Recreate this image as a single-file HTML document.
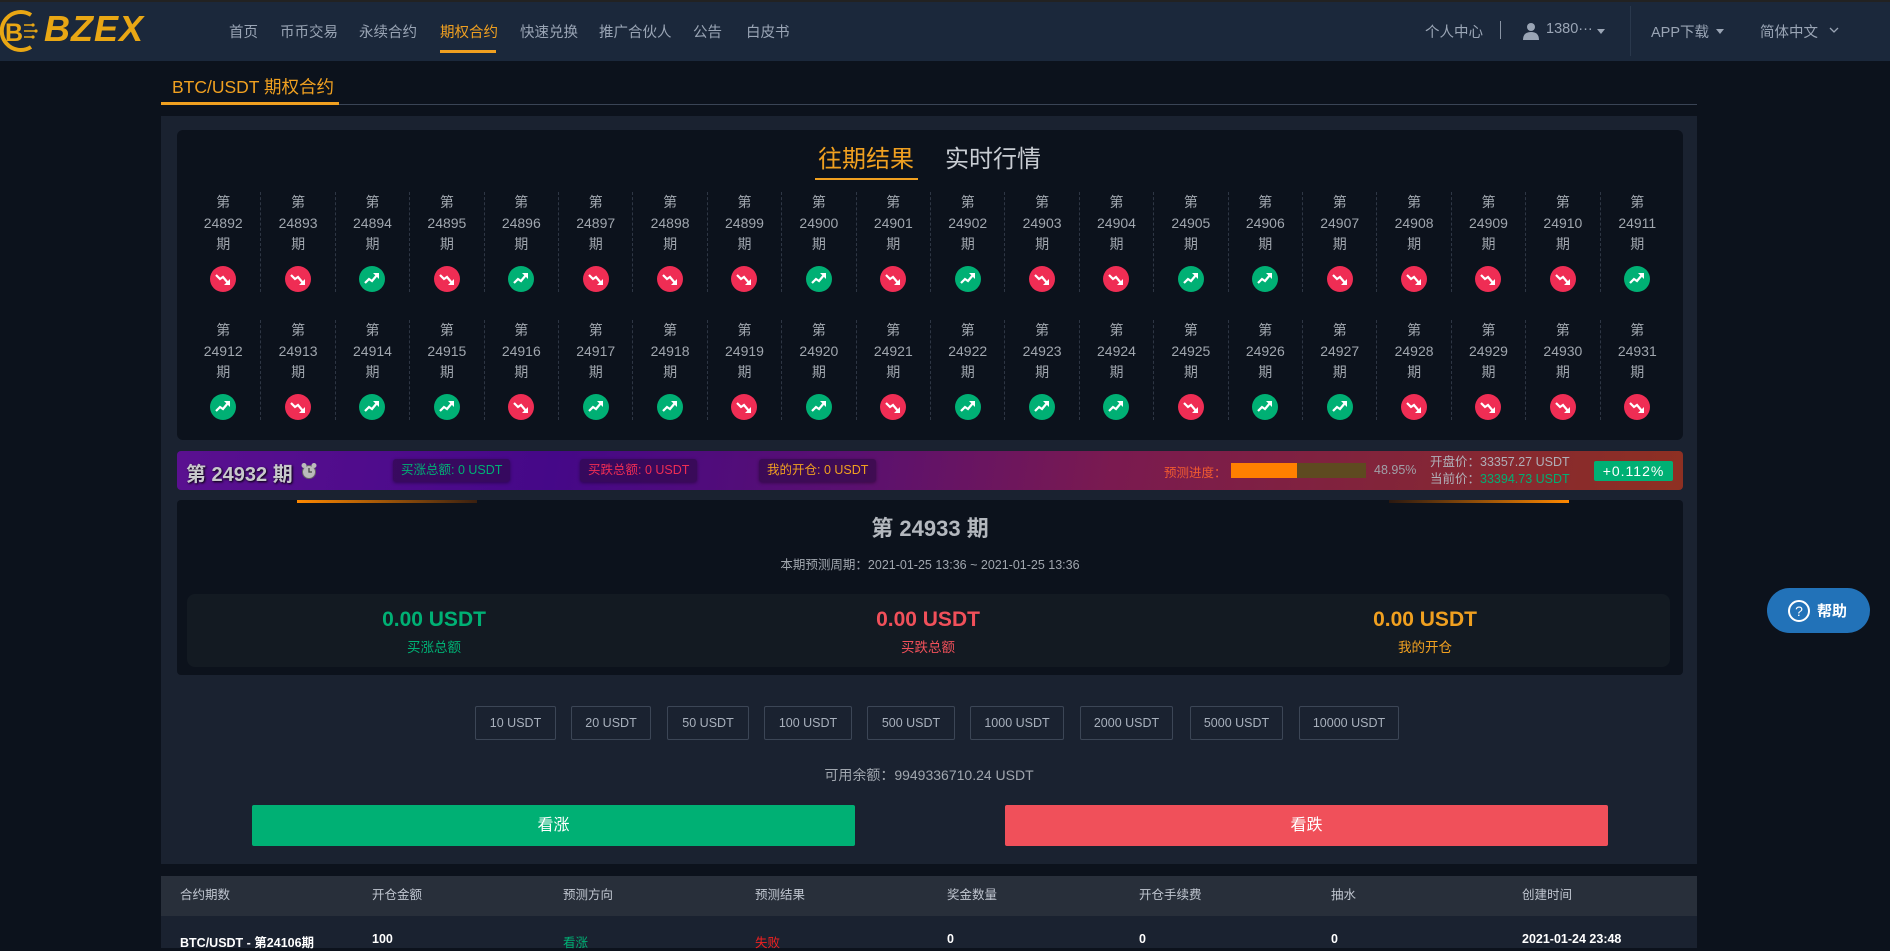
<!DOCTYPE html>
<html><head><meta charset="utf-8"><style>
*{margin:0;padding:0;box-sizing:border-box}
body{width:1890px;height:948px;overflow:hidden;background:#0c121c;font-family:"Liberation Sans","Noto Sans CJK SC",sans-serif;position:relative;color:#aab}
.a{position:absolute}
.hdr{left:0;top:0;width:1890px;height:61px;background:#1b283b;border-top:2px solid #222}
.nav{top:21px;font-size:14.5px;color:#9aa5b5;white-space:nowrap}
.nav.on{color:#f0a020}
.box{background:#0c121c;border-radius:6px}
.col{position:absolute;width:74.4px;height:100px;text-align:center;font-size:14px;line-height:21px;color:#a0a6ae}
.col+.col{border-left:1px dashed #2e3644}
.ic{display:block;width:26px;height:26px;border-radius:50%;margin:11px auto 0}
.u{background:#00b074}.d{background:#ef2d54}
.ic svg{display:block}
.chip{top:8px;height:23px;line-height:23px;font-size:12.5px;padding:0 8px;background:rgba(40,10,60,.55);border-radius:3px;box-shadow:0 1px 3px rgba(0,0,0,.4)}
.amt{top:706px;height:34px;line-height:32px;border:1px solid #3c4656;border-radius:2px;font-size:12.5px;color:#a8b0bc;text-align:center}
.th{top:884px;font-size:12.5px;color:#c0c6d0}
.td{top:932px;font-size:12.5px;color:#fff;font-weight:bold}
</style></head><body>
<div class="a hdr"></div>
<svg class="a" style="left:0;top:8px" width="42" height="46" viewBox="0 0 42 46"><path d="M31 7 A19 19 0 1 0 31 39" fill="none" stroke="#e9a714" stroke-width="4"/><text x="5" y="33" font-family="Liberation Sans" font-weight="bold" font-size="25" fill="#e9a714">B</text><path d="M24 17h8M24 23h11M24 29h8" stroke="#e9a714" stroke-width="1.6"/><circle cx="33" cy="17" r="1.6" fill="#e9a714"/><circle cx="36" cy="23" r="1.6" fill="#e9a714"/><circle cx="33" cy="29" r="1.6" fill="#e9a714"/></svg>
<div class="a" style="left:44px;top:8px;font-size:36px;font-weight:bold;font-style:italic;color:#e9a714;letter-spacing:1px">BZEX</div>
<div class="a nav" style="left:229px">首页</div>
<div class="a nav" style="left:280px">币币交易</div>
<div class="a nav" style="left:359px">永续合约</div>
<div class="a nav on" style="left:440px">期权合约</div>
<div class="a" style="left:440px;top:50px;width:56px;height:3px;background:#f0a020"></div>
<div class="a nav" style="left:520px">快速兑换</div>
<div class="a nav" style="left:599px">推广合伙人</div>
<div class="a nav" style="left:693px">公告</div>
<div class="a nav" style="left:746px">白皮书</div>
<div class="a nav" style="left:1425px">个人中心</div>
<div class="a" style="left:1500px;top:21px;width:1px;height:18px;background:#8a95a5"></div>
<svg class="a" style="left:1522px;top:22px" width="18" height="18" viewBox="0 0 18 18"><circle cx="9" cy="5" r="4" fill="#9aa5b5"/><path d="M1 18 Q1 10 9 10 Q17 10 17 18Z" fill="#9aa5b5"/></svg>
<div class="a nav" style="left:1546px">1380···</div>
<div class="a" style="left:1597px;top:29px;border:4px solid transparent;border-top:5px solid #9aa5b5"></div>
<div class="a" style="left:1630px;top:6px;width:1px;height:50px;background:#2a384c"></div>
<div class="a nav" style="left:1651px">APP下载</div>
<div class="a" style="left:1716px;top:29px;border:4px solid transparent;border-top:5px solid #9aa5b5"></div>
<div class="a nav" style="left:1760px">简体中文</div>
<svg class="a" style="left:1829px;top:27px" width="10" height="7"><path d="M1 1l4 4 4-4" stroke="#9aa5b5" fill="none" stroke-width="1.3"/></svg>

<div class="a" style="left:172px;top:74px;font-size:17.5px;color:#f0a020">BTC/USDT 期权合约</div>
<div class="a" style="left:161px;top:104px;width:1536px;height:1px;background:#3a4455"></div>
<div class="a" style="left:161px;top:102px;width:178px;height:3px;background:#f0a020"></div>

<div class="a" style="left:161px;top:116px;width:1536px;height:748px;background:#1a2230"></div>
<div class="a box" style="left:177px;top:130px;width:1506px;height:310px">
<div class="a" style="left:641px;top:9px;font-size:24px;color:#f0a020">往期结果</div>
<div class="a" style="left:638px;top:48px;width:103px;height:2px;background:#f0a020"></div>
<div class="a" style="left:768px;top:9px;font-size:24px;color:#c8ccd2">实时行情</div>
<div class="a" style="left:9px;top:62px;width:1488px;height:100px">
<div class="col" style="left:0"><p>第</p><p>24892</p><p>期</p><i class="ic d"><svg width="26" height="26"><path d="M6 9l4 4 3-2 5 6" stroke="#fff" stroke-width="2.2" fill="none"/><path d="M20 19h-6l6-6z" fill="#fff"/></svg></i></div>
<div class="col" style="left:74.4px"><p>第</p><p>24893</p><p>期</p><i class="ic d"><svg width="26" height="26"><path d="M6 9l4 4 3-2 5 6" stroke="#fff" stroke-width="2.2" fill="none"/><path d="M20 19h-6l6-6z" fill="#fff"/></svg></i></div>
<div class="col" style="left:148.8px"><p>第</p><p>24894</p><p>期</p><i class="ic u"><svg width="26" height="26"><path d="M6 17l4-4 3 2 5-6" stroke="#fff" stroke-width="2.2" fill="none"/><path d="M20 7h-6l6 6z" fill="#fff"/></svg></i></div>
<div class="col" style="left:223.2px"><p>第</p><p>24895</p><p>期</p><i class="ic d"><svg width="26" height="26"><path d="M6 9l4 4 3-2 5 6" stroke="#fff" stroke-width="2.2" fill="none"/><path d="M20 19h-6l6-6z" fill="#fff"/></svg></i></div>
<div class="col" style="left:297.6px"><p>第</p><p>24896</p><p>期</p><i class="ic u"><svg width="26" height="26"><path d="M6 17l4-4 3 2 5-6" stroke="#fff" stroke-width="2.2" fill="none"/><path d="M20 7h-6l6 6z" fill="#fff"/></svg></i></div>
<div class="col" style="left:372px"><p>第</p><p>24897</p><p>期</p><i class="ic d"><svg width="26" height="26"><path d="M6 9l4 4 3-2 5 6" stroke="#fff" stroke-width="2.2" fill="none"/><path d="M20 19h-6l6-6z" fill="#fff"/></svg></i></div>
<div class="col" style="left:446.4px"><p>第</p><p>24898</p><p>期</p><i class="ic d"><svg width="26" height="26"><path d="M6 9l4 4 3-2 5 6" stroke="#fff" stroke-width="2.2" fill="none"/><path d="M20 19h-6l6-6z" fill="#fff"/></svg></i></div>
<div class="col" style="left:520.8px"><p>第</p><p>24899</p><p>期</p><i class="ic d"><svg width="26" height="26"><path d="M6 9l4 4 3-2 5 6" stroke="#fff" stroke-width="2.2" fill="none"/><path d="M20 19h-6l6-6z" fill="#fff"/></svg></i></div>
<div class="col" style="left:595.2px"><p>第</p><p>24900</p><p>期</p><i class="ic u"><svg width="26" height="26"><path d="M6 17l4-4 3 2 5-6" stroke="#fff" stroke-width="2.2" fill="none"/><path d="M20 7h-6l6 6z" fill="#fff"/></svg></i></div>
<div class="col" style="left:669.6px"><p>第</p><p>24901</p><p>期</p><i class="ic d"><svg width="26" height="26"><path d="M6 9l4 4 3-2 5 6" stroke="#fff" stroke-width="2.2" fill="none"/><path d="M20 19h-6l6-6z" fill="#fff"/></svg></i></div>
<div class="col" style="left:744px"><p>第</p><p>24902</p><p>期</p><i class="ic u"><svg width="26" height="26"><path d="M6 17l4-4 3 2 5-6" stroke="#fff" stroke-width="2.2" fill="none"/><path d="M20 7h-6l6 6z" fill="#fff"/></svg></i></div>
<div class="col" style="left:818.4px"><p>第</p><p>24903</p><p>期</p><i class="ic d"><svg width="26" height="26"><path d="M6 9l4 4 3-2 5 6" stroke="#fff" stroke-width="2.2" fill="none"/><path d="M20 19h-6l6-6z" fill="#fff"/></svg></i></div>
<div class="col" style="left:892.8px"><p>第</p><p>24904</p><p>期</p><i class="ic d"><svg width="26" height="26"><path d="M6 9l4 4 3-2 5 6" stroke="#fff" stroke-width="2.2" fill="none"/><path d="M20 19h-6l6-6z" fill="#fff"/></svg></i></div>
<div class="col" style="left:967.2px"><p>第</p><p>24905</p><p>期</p><i class="ic u"><svg width="26" height="26"><path d="M6 17l4-4 3 2 5-6" stroke="#fff" stroke-width="2.2" fill="none"/><path d="M20 7h-6l6 6z" fill="#fff"/></svg></i></div>
<div class="col" style="left:1041.6px"><p>第</p><p>24906</p><p>期</p><i class="ic u"><svg width="26" height="26"><path d="M6 17l4-4 3 2 5-6" stroke="#fff" stroke-width="2.2" fill="none"/><path d="M20 7h-6l6 6z" fill="#fff"/></svg></i></div>
<div class="col" style="left:1116px"><p>第</p><p>24907</p><p>期</p><i class="ic d"><svg width="26" height="26"><path d="M6 9l4 4 3-2 5 6" stroke="#fff" stroke-width="2.2" fill="none"/><path d="M20 19h-6l6-6z" fill="#fff"/></svg></i></div>
<div class="col" style="left:1190.4px"><p>第</p><p>24908</p><p>期</p><i class="ic d"><svg width="26" height="26"><path d="M6 9l4 4 3-2 5 6" stroke="#fff" stroke-width="2.2" fill="none"/><path d="M20 19h-6l6-6z" fill="#fff"/></svg></i></div>
<div class="col" style="left:1264.8px"><p>第</p><p>24909</p><p>期</p><i class="ic d"><svg width="26" height="26"><path d="M6 9l4 4 3-2 5 6" stroke="#fff" stroke-width="2.2" fill="none"/><path d="M20 19h-6l6-6z" fill="#fff"/></svg></i></div>
<div class="col" style="left:1339.2px"><p>第</p><p>24910</p><p>期</p><i class="ic d"><svg width="26" height="26"><path d="M6 9l4 4 3-2 5 6" stroke="#fff" stroke-width="2.2" fill="none"/><path d="M20 19h-6l6-6z" fill="#fff"/></svg></i></div>
<div class="col" style="left:1413.6px"><p>第</p><p>24911</p><p>期</p><i class="ic u"><svg width="26" height="26"><path d="M6 17l4-4 3 2 5-6" stroke="#fff" stroke-width="2.2" fill="none"/><path d="M20 7h-6l6 6z" fill="#fff"/></svg></i></div>
</div>
<div class="a" style="left:9px;top:190px;width:1488px;height:100px">
<div class="col" style="left:0"><p>第</p><p>24912</p><p>期</p><i class="ic u"><svg width="26" height="26"><path d="M6 17l4-4 3 2 5-6" stroke="#fff" stroke-width="2.2" fill="none"/><path d="M20 7h-6l6 6z" fill="#fff"/></svg></i></div>
<div class="col" style="left:74.4px"><p>第</p><p>24913</p><p>期</p><i class="ic d"><svg width="26" height="26"><path d="M6 9l4 4 3-2 5 6" stroke="#fff" stroke-width="2.2" fill="none"/><path d="M20 19h-6l6-6z" fill="#fff"/></svg></i></div>
<div class="col" style="left:148.8px"><p>第</p><p>24914</p><p>期</p><i class="ic u"><svg width="26" height="26"><path d="M6 17l4-4 3 2 5-6" stroke="#fff" stroke-width="2.2" fill="none"/><path d="M20 7h-6l6 6z" fill="#fff"/></svg></i></div>
<div class="col" style="left:223.2px"><p>第</p><p>24915</p><p>期</p><i class="ic u"><svg width="26" height="26"><path d="M6 17l4-4 3 2 5-6" stroke="#fff" stroke-width="2.2" fill="none"/><path d="M20 7h-6l6 6z" fill="#fff"/></svg></i></div>
<div class="col" style="left:297.6px"><p>第</p><p>24916</p><p>期</p><i class="ic d"><svg width="26" height="26"><path d="M6 9l4 4 3-2 5 6" stroke="#fff" stroke-width="2.2" fill="none"/><path d="M20 19h-6l6-6z" fill="#fff"/></svg></i></div>
<div class="col" style="left:372px"><p>第</p><p>24917</p><p>期</p><i class="ic u"><svg width="26" height="26"><path d="M6 17l4-4 3 2 5-6" stroke="#fff" stroke-width="2.2" fill="none"/><path d="M20 7h-6l6 6z" fill="#fff"/></svg></i></div>
<div class="col" style="left:446.4px"><p>第</p><p>24918</p><p>期</p><i class="ic u"><svg width="26" height="26"><path d="M6 17l4-4 3 2 5-6" stroke="#fff" stroke-width="2.2" fill="none"/><path d="M20 7h-6l6 6z" fill="#fff"/></svg></i></div>
<div class="col" style="left:520.8px"><p>第</p><p>24919</p><p>期</p><i class="ic d"><svg width="26" height="26"><path d="M6 9l4 4 3-2 5 6" stroke="#fff" stroke-width="2.2" fill="none"/><path d="M20 19h-6l6-6z" fill="#fff"/></svg></i></div>
<div class="col" style="left:595.2px"><p>第</p><p>24920</p><p>期</p><i class="ic u"><svg width="26" height="26"><path d="M6 17l4-4 3 2 5-6" stroke="#fff" stroke-width="2.2" fill="none"/><path d="M20 7h-6l6 6z" fill="#fff"/></svg></i></div>
<div class="col" style="left:669.6px"><p>第</p><p>24921</p><p>期</p><i class="ic d"><svg width="26" height="26"><path d="M6 9l4 4 3-2 5 6" stroke="#fff" stroke-width="2.2" fill="none"/><path d="M20 19h-6l6-6z" fill="#fff"/></svg></i></div>
<div class="col" style="left:744px"><p>第</p><p>24922</p><p>期</p><i class="ic u"><svg width="26" height="26"><path d="M6 17l4-4 3 2 5-6" stroke="#fff" stroke-width="2.2" fill="none"/><path d="M20 7h-6l6 6z" fill="#fff"/></svg></i></div>
<div class="col" style="left:818.4px"><p>第</p><p>24923</p><p>期</p><i class="ic u"><svg width="26" height="26"><path d="M6 17l4-4 3 2 5-6" stroke="#fff" stroke-width="2.2" fill="none"/><path d="M20 7h-6l6 6z" fill="#fff"/></svg></i></div>
<div class="col" style="left:892.8px"><p>第</p><p>24924</p><p>期</p><i class="ic u"><svg width="26" height="26"><path d="M6 17l4-4 3 2 5-6" stroke="#fff" stroke-width="2.2" fill="none"/><path d="M20 7h-6l6 6z" fill="#fff"/></svg></i></div>
<div class="col" style="left:967.2px"><p>第</p><p>24925</p><p>期</p><i class="ic d"><svg width="26" height="26"><path d="M6 9l4 4 3-2 5 6" stroke="#fff" stroke-width="2.2" fill="none"/><path d="M20 19h-6l6-6z" fill="#fff"/></svg></i></div>
<div class="col" style="left:1041.6px"><p>第</p><p>24926</p><p>期</p><i class="ic u"><svg width="26" height="26"><path d="M6 17l4-4 3 2 5-6" stroke="#fff" stroke-width="2.2" fill="none"/><path d="M20 7h-6l6 6z" fill="#fff"/></svg></i></div>
<div class="col" style="left:1116px"><p>第</p><p>24927</p><p>期</p><i class="ic u"><svg width="26" height="26"><path d="M6 17l4-4 3 2 5-6" stroke="#fff" stroke-width="2.2" fill="none"/><path d="M20 7h-6l6 6z" fill="#fff"/></svg></i></div>
<div class="col" style="left:1190.4px"><p>第</p><p>24928</p><p>期</p><i class="ic d"><svg width="26" height="26"><path d="M6 9l4 4 3-2 5 6" stroke="#fff" stroke-width="2.2" fill="none"/><path d="M20 19h-6l6-6z" fill="#fff"/></svg></i></div>
<div class="col" style="left:1264.8px"><p>第</p><p>24929</p><p>期</p><i class="ic d"><svg width="26" height="26"><path d="M6 9l4 4 3-2 5 6" stroke="#fff" stroke-width="2.2" fill="none"/><path d="M20 19h-6l6-6z" fill="#fff"/></svg></i></div>
<div class="col" style="left:1339.2px"><p>第</p><p>24930</p><p>期</p><i class="ic d"><svg width="26" height="26"><path d="M6 9l4 4 3-2 5 6" stroke="#fff" stroke-width="2.2" fill="none"/><path d="M20 19h-6l6-6z" fill="#fff"/></svg></i></div>
<div class="col" style="left:1413.6px"><p>第</p><p>24931</p><p>期</p><i class="ic d"><svg width="26" height="26"><path d="M6 9l4 4 3-2 5 6" stroke="#fff" stroke-width="2.2" fill="none"/><path d="M20 19h-6l6-6z" fill="#fff"/></svg></i></div>
</div>
</div>

<div class="a" style="left:177px;top:451px;width:1506px;height:39px;border-radius:4px;background:linear-gradient(100deg,#5a1090 0%,#450888 25%,#5a1070 45%,#7a1a50 62%,#82243a 80%,#8e3022 100%)">
<div class="a" style="left:9px;top:7px;font-size:20px;font-weight:bold;color:#c8c8cc;text-shadow:1px 1px 2px #000">第 24932 期</div>
<svg class="a" style="left:123px;top:11px" width="18" height="18"><circle cx="9" cy="10" r="6.5" fill="#bbb" stroke="#666" stroke-width="1"/><circle cx="4" cy="3.5" r="2.5" fill="#bbb"/><circle cx="14" cy="3.5" r="2.5" fill="#bbb"/><path d="M9 6v4h3" stroke="#444" stroke-width="1.3" fill="none"/></svg>
<div class="a chip" style="left:216px;color:#00b074">买涨总额: 0 USDT</div>
<div class="a chip" style="left:403px;color:#ef2d54">买跌总额: 0 USDT</div>
<div class="a chip" style="left:582px;color:#f0a020">我的开仓: 0 USDT</div>
<div class="a" style="left:987px;top:11px;font-size:12.5px;color:#f05a30">预测进度：</div>
<div class="a" style="left:1054px;top:12px;width:135px;height:15px;background:#5e4a20"><div style="width:66px;height:15px;background:#ff8000"></div></div>
<div class="a" style="left:1197px;top:12px;font-size:12.5px;color:#a0a0a8">48.95%</div>
<div class="a" style="left:1253px;top:3px;font-size:12.5px;color:#b0b0b8;line-height:17px">开盘价：33357.27 USDT<br>当前价：<span style="color:#00b074">33394.73 USDT</span></div>
<div class="a" style="left:1417px;top:10px;width:79px;height:20px;background:#00b074;border-radius:2px;color:#fff;font-size:14px;text-align:center;line-height:20px;letter-spacing:1px">+0.112%</div>
</div>

<div class="a box" style="left:177px;top:500px;width:1506px;height:175px;border-radius:4px">
<div class="a" style="left:120px;top:0;width:180px;height:3px;background:linear-gradient(90deg,#ff8800,#3a2010)"></div>
<div class="a" style="left:1212px;top:0;width:180px;height:3px;background:linear-gradient(90deg,#2a1810,#ff8800)"></div>
<div class="a" style="left:0;top:11px;width:1506px;text-align:center;font-size:22px;font-weight:bold;color:#b4b8be">第 24933 期</div>
<div class="a" style="left:0;top:54px;width:1506px;text-align:center;font-size:12.5px;color:#a0a6ae">本期预测周期：2021-01-25 13:36 ~ 2021-01-25 13:36</div>
<div class="a" style="left:10px;top:94px;width:1483px;height:73px;background:#131a22;border-radius:8px">
<div class="a" style="left:47px;top:14px;width:400px;text-align:center;font-size:21px;font-weight:bold;color:#00b074">0.00 USDT</div>
<div class="a" style="left:47px;top:42px;width:400px;text-align:center;font-size:13.5px;color:#00b074">买涨总额</div>
<div class="a" style="left:541px;top:14px;width:400px;text-align:center;font-size:21px;font-weight:bold;color:#f0505a">0.00 USDT</div>
<div class="a" style="left:541px;top:42px;width:400px;text-align:center;font-size:13.5px;color:#f0505a">买跌总额</div>
<div class="a" style="left:1038px;top:14px;width:400px;text-align:center;font-size:21px;font-weight:bold;color:#f0a020">0.00 USDT</div>
<div class="a" style="left:1038px;top:42px;width:400px;text-align:center;font-size:13.5px;color:#f0a020">我的开仓</div>
</div>
</div>

<div class="a amt" style="left:475px;width:81px">10 USDT</div>
<div class="a amt" style="left:571px;width:80px">20 USDT</div>
<div class="a amt" style="left:667px;width:82px">50 USDT</div>
<div class="a amt" style="left:764px;width:88px">100 USDT</div>
<div class="a amt" style="left:867px;width:88px">500 USDT</div>
<div class="a amt" style="left:970px;width:94px">1000 USDT</div>
<div class="a amt" style="left:1080px;width:93px">2000 USDT</div>
<div class="a amt" style="left:1190px;width:93px">5000 USDT</div>
<div class="a amt" style="left:1299px;width:100px">10000 USDT</div>
<div class="a" style="left:161px;top:765px;width:1536px;text-align:center;font-size:14px;color:#a0a6ae">可用余额：9949336710.24 USDT</div>
<div class="a" style="left:252px;top:805px;width:603px;height:41px;background:#00b074;border-radius:2px;color:#fff;font-size:16px;text-align:center;line-height:41px">看涨</div>
<div class="a" style="left:1005px;top:805px;width:603px;height:41px;background:#f0505a;border-radius:2px;color:#fff;font-size:16px;text-align:center;line-height:41px">看跌</div>

<div class="a" style="left:161px;top:876px;width:1536px;height:40px;background:#282f3a"></div>
<div class="a" style="left:161px;top:916px;width:1536px;height:32px;background:#1a2230"></div>
<div class="a th" style="left:180px">合约期数</div>
<div class="a th" style="left:372px">开仓金额</div>
<div class="a th" style="left:563px">预测方向</div>
<div class="a th" style="left:755px">预测结果</div>
<div class="a th" style="left:947px">奖金数量</div>
<div class="a th" style="left:1139px">开仓手续费</div>
<div class="a th" style="left:1331px">抽水</div>
<div class="a th" style="left:1522px">创建时间</div>
<div class="a td" style="left:180px">BTC/USDT - 第24106期</div>
<div class="a td" style="left:372px">100</div>
<div class="a td" style="left:563px;color:#00b074;font-weight:normal">看涨</div>
<div class="a td" style="left:755px;color:#f02020;font-weight:normal">失败</div>
<div class="a td" style="left:947px">0</div>
<div class="a td" style="left:1139px">0</div>
<div class="a td" style="left:1331px">0</div>
<div class="a td" style="left:1522px">2021-01-24 23:48</div>

<div class="a" style="left:1767px;top:588px;width:103px;height:45px;border-radius:23px;background:#2272b8"></div>
<svg class="a" style="left:1787px;top:599px" width="24" height="24"><circle cx="12" cy="12" r="10" fill="none" stroke="#fff" stroke-width="2"/><text x="12" y="17" text-anchor="middle" font-family="Liberation Sans" font-size="14" fill="#fff">?</text></svg>
<div class="a" style="left:1817px;top:600px;font-size:15px;font-weight:bold;color:#fff">帮助</div>
</body></html>
